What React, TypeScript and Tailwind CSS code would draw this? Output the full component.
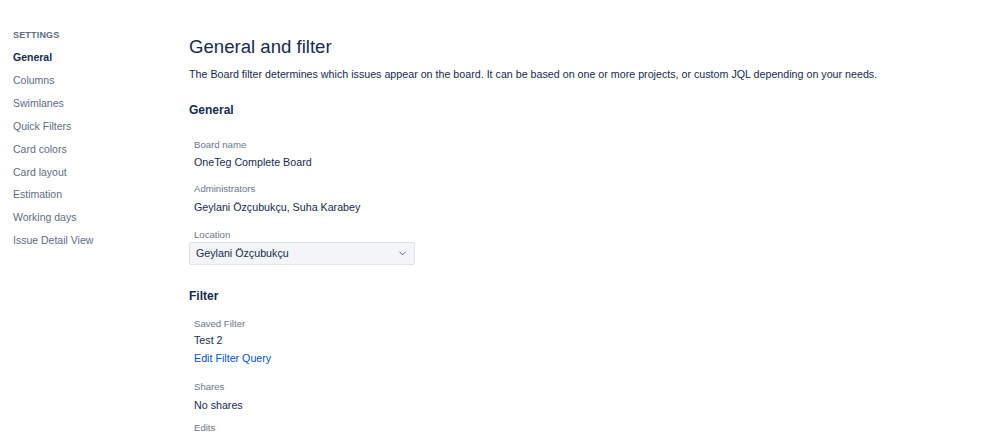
import { ChevronDown } from 'lucide-react';

const NAV = ['General', 'Columns', 'Swimlanes', 'Quick Filters', 'Card colors', 'Card layout', 'Estimation', 'Working days', 'Issue Detail View'];

function Field({ label, className, children }: { label: string; className?: string; children?: React.ReactNode }) {
    return (
        <div className={'pl-[5px] ' + (className ?? '')}>
            <p className="text-[9.6px] leading-[14px] text-[#6b778c]">{label}</p>
            {children}
        </div>
    );
}

export default function App() {
    return (
        <div className="flex w-[998px] h-[442px] overflow-hidden bg-white text-[#172b4d]" style={{ fontFamily: '"Liberation Sans", Arial, sans-serif' }}>
            <aside className="w-[189px] shrink-0 pl-[13px] pt-[29px]">
                <p className="text-[9px] font-bold tracking-[0.02em] text-[#5e6c84] leading-[12px]">SETTINGS</p>
                <ul className="mt-[5px] flex flex-col">
                    {NAV.map((item, i) => (
                        <li
                            key={item}
                            className={i === 0 ? 'text-[10.5px] leading-[22.9px] font-bold text-[#172b4d]' : 'text-[10.5px] leading-[22.9px] text-[#5e6c84]'}
                        >
                            {item}
                        </li>
                    ))}
                </ul>
            </aside>

            <main className="flex-1 pt-[35px]">
                <h1 className="text-[18.6px] leading-[24px] text-[#172b4d]">General and filter</h1>
                <p className="mt-[8px] text-[10.7px] leading-[14px] text-[#172b4d]">
                    The Board filter determines which issues appear on the board. It can be based on one or more projects, or custom JQL depending on your needs.
                </p>

                <h2 className="mt-[21px] text-[12px] font-bold leading-[16px] text-[#172b4d]">General</h2>

                <div className="mt-[20px] flex flex-col gap-[12px]">
                    <Field label="Board name">
                        <p className="mt-[2px] text-[10.7px] leading-[16px]">OneTeg Complete Board</p>
                    </Field>
                    <Field label="Administrators">
                        <p className="mt-[3px] text-[10.7px] leading-[16px]">Geylani Özçubukçu, Suha Karabey</p>
                    </Field>
                    <div className="mt-[1px]">
                        <p className="pl-[5px] text-[9.6px] leading-[14px] text-[#6b778c]">Location</p>
                        <div className="flex w-[226px] h-[23px] items-center justify-between rounded-[2px] border border-[#dfe1e6] bg-[#f4f5f7] pl-[6px] pr-[6px]">
                            <span className="text-[10.7px] text-[#172b4d]">Geylani Özçubukçu</span>
                            <ChevronDown className="h-[11px] w-[11px] text-[#42526e]" strokeWidth={2} />
                        </div>
                    </div>
                </div>

                <h2 className="mt-[23px] text-[12px] font-bold leading-[16px] text-[#172b4d]">Filter</h2>

                <div className="mt-[13px] flex flex-col gap-[13px]">
                    <Field label="Saved Filter">
                        <p className="mt-[1px] text-[10.7px] leading-[17px]">Test 2</p>
                        <p className="text-[10.7px] leading-[18px] text-[#0052cc]">Edit Filter Query</p>
                    </Field>
                    <Field label="Shares">
                        <p className="mt-[3px] text-[10.7px] leading-[16px]">No shares</p>
                    </Field>
                    <Field label="Edits" className="-mt-[5px]" />
                </div>
            </main>
        </div>
    );
}
